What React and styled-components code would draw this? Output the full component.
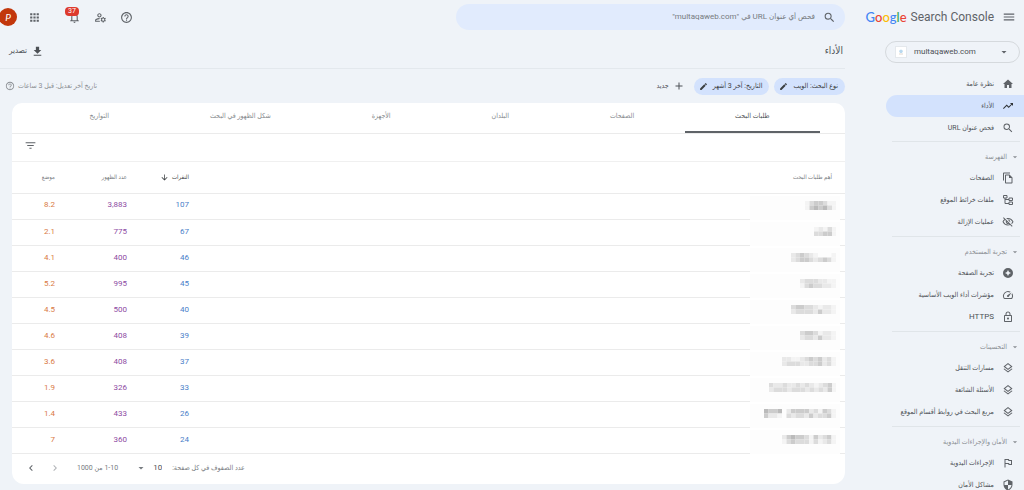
import React from "react";
import styled, { createGlobalStyle, css } from "styled-components";
import {
  MdAdd, MdApps, MdArrowDownward, MdArrowDropDown, MdChevronLeft, MdChevronRight,
  MdEdit, MdFileDownload, MdFilterList, MdHelpOutline, MdHome, MdMenu,
  MdNotificationsNone, MdOutlineFileCopy, MdOutlineFlag,
  MdOutlineLayers, MdOutlineLock, MdOutlineManageAccounts, MdOutlineSpeed,
  MdOutlineVisibilityOff, MdSearch, MdSecurity, MdTrendingUp,
} from "react-icons/md";

const fonts = `Roboto, "DejaVu Sans Condensed", "DejaVu Sans", sans-serif`;

const GlobalStyle = createGlobalStyle`
  * { box-sizing: border-box; }
  body { margin: 0; background: #eff3f8; color: #5f6368; font: 7px/12px ${fonts}; overflow: hidden; }
  button, input, select { font: inherit; color: inherit; border: 0; background: none; padding: 0; margin: 0; }
  button, select { cursor: pointer; }
  h1, h2, ul { margin: 0; padding: 0; list-style: none; font: inherit; }
  a { color: inherit; text-decoration: none; }
  svg { display: block; flex: none; }
`;

const Page = styled.div`
  display: flex;
  height: 100vh;
  overflow: hidden;
`;

const Sidebar = styled.aside`
  flex: none;
  width: 179px;
  overflow: hidden;
`;

const Brand = styled.div`
  display: flex;
  align-items: center;
  gap: 8px;
  height: 34px;
  padding-right: 8px;
`;

const Logo = styled.a`
  display: flex;
  gap: 4px;
  direction: ltr;
  font: 12px/20px Roboto, sans-serif;
  color: #5f6368;
  white-space: nowrap;
`;

const Google = styled.span`
  font: 500 13px/20px Lato, sans-serif;
`;

const Letter = styled.span`
  color: ${(p) => p.$color};
`;

const IconButton = styled.button`
  position: relative;
  display: flex;
  color: ${(p) => (p.$faded ? "#b0b3b6" : "#5f6368")};
`;

const SitePicker = styled.label`
  display: flex;
  direction: ltr;
  align-items: center;
  height: 22px;
  margin: 7px 4px 10px 40px;
  padding: 0 9px;
  border: 1px solid #d5d9dd;
  border-radius: 11px;
`;

const Favicon = styled.span`
  display: grid;
  place-items: center;
  width: 12px;
  height: 12px;
  border: 1px solid #e4e8ec;
  background: #fff;
`;

const PlainSelect = styled.select`
  appearance: none;
  outline: 0;
  font-size: 8px;
  color: #4d5156;
`;

const SiteSelect = styled(PlainSelect)`
  flex: 1;
  min-width: 0;
  padding-left: 7px;
`;

const NavArea = styled.nav`
  margin-left: 41px;
`;

const NavList = styled.ul`
  padding-bottom: 2px;
`;

const NavLink = styled.a`
  display: flex;
  align-items: center;
  gap: 8px;
  height: 22px;
  padding-right: 10px;
  color: #4d5156;
  white-space: nowrap;
  svg { color: #5f6368; }
  ${(p) => p.$active && css`
    background: #d3e2fd;
    border-radius: 11px 0 0 11px;
    svg { color: #303438; }
  `}
`;

const Latin = styled.span`
  font-size: 8px;
`;

const Section = styled.section`
  padding-bottom: 1px;
  &::before {
    content: "";
    display: block;
    height: 1px;
    margin: 0 4px 0 6px;
    background: #e0e5e9;
  }
`;

const SectionTitle = styled.h2`
  display: flex;
  align-items: center;
  gap: 3px;
  height: 25px;
  padding: 5px 4px 0 0;
  color: #8a8e93;
`;

const Main = styled.main`
  flex: 1;
  min-width: 0;
`;

const TopBar = styled.header`
  display: flex;
  justify-content: space-between;
  align-items: center;
  height: 34px;
`;

const SearchBox = styled.label`
  display: flex;
  align-items: center;
  gap: 8px;
  width: 46%;
  height: 26px;
  padding: 0 9px;
  border-radius: 13px;
  background: #e1ebfd;
`;

const SearchInput = styled.input`
  flex: 1;
  min-width: 0;
  outline: 0;
  font-size: 8px;
  &::placeholder { color: #777b80; opacity: 1; }
`;

const Tools = styled.div`
  display: flex;
  align-items: center;
  gap: 13px;
`;

const AppTools = styled.div`
  display: flex;
  align-items: center;
  gap: 11px;
  margin-right: 14px;
`;

const Badge = styled.span`
  position: absolute;
  top: -4px;
  left: -3px;
  padding: 0 3px;
  border-radius: 4px;
  background: #dd3a2e;
  color: #fff;
  line-height: 9px;
`;

const Avatar = styled.button`
  width: 18px;
  height: 18px;
  margin-left: -1px;
  border-radius: 50%;
  background: #c2370c;
  color: #fff;
  font: italic 10px/18px Lato, sans-serif;
`;

const TitleBar = styled.div`
  display: flex;
  justify-content: space-between;
  align-items: center;
  height: 35px;
  padding: 0 2px 0 5px;
  border-bottom: 1px solid #e3e8ed;
`;

const Title = styled.h1`
  font-size: 10px;
  color: #4d5156;
`;

const TextButton = styled.button`
  display: flex;
  align-items: center;
  gap: 4px;
  padding: 0 4px;
  font-size: ${(p) => (p.$large ? 8 : 7)}px;
  color: #4d5156;
`;

const FilterBar = styled.div`
  display: flex;
  align-items: center;
  gap: 5px;
  height: 34px;
`;

const Chip = styled.button`
  display: flex;
  align-items: center;
  gap: 5px;
  height: 17px;
  padding: 0 7px 0 5px;
  border-radius: 9px;
  background: #d3e2fd;
  color: #3c4043;
`;

const Updated = styled.span`
  display: flex;
  align-items: center;
  gap: 3px;
  margin-right: auto;
  padding-left: 5px;
  color: #8a8e93;
`;

const Card = styled.section`
  margin-left: 12px;
  border-radius: 10px 10px 12px 12px;
  background: #fff;
  overflow: hidden;
`;

const Tabs = styled.div`
  display: flex;
  height: 31px;
  padding: 0 25px 0 27px;
  border-bottom: 1px solid #ebebeb;
`;

const Tab = styled.button`
  flex: 1 1 auto;
  padding-bottom: 2px;
  border-bottom: 2px solid ${(p) => (p.$active ? "#5f6368" : "transparent")};
  color: ${(p) => (p.$active ? "#4d5156" : "#85898d")};
`;

const TableTools = styled.div`
  display: flex;
  justify-content: flex-end;
  height: 28px;
  padding: 5px 0 0 12px;
  border-bottom: 1px solid #f0f0f0;
`;

const Table = styled.table`
  width: 100%;
  table-layout: fixed;
  border-collapse: collapse;
`;

const Col = styled.col`
  width: ${(p) => p.$width};
`;

const HeadCell = styled.th`
  height: 31px;
  padding: 0 ${(p) => (p.$first ? 13 : 0)}px 0 0;
  border-bottom: 1px solid #ebebeb;
  text-align: right;
  font-size: 6px;
  font-weight: 400;
  color: ${(p) => (p.$sorted ? "#3c4043" : "#777b80")};
`;

const SortButton = styled.button`
  display: flex;
  align-items: center;
  gap: 3px;
`;

const metricColors = { clicks: "#4a80c9", impressions: "#8d4ba3", position: "#d97a45" };

const MetricCell = styled.td`
  height: 26px;
  padding: 0 0 2px;
  border-bottom: 1px solid #ebebeb;
  font-size: 8px;
  color: ${(p) => metricColors[p.$metric]};
`;

const QueryCell = styled.td`
  height: 26px;
  padding: 0;
`;

const QueryLine = styled.div`
  display: grid;
  grid-template-columns: 5px 90px 1fr;
  height: 26px;
`;

const Rule = styled.span`
  border-bottom: 1px solid #ebebeb;
`;

const Hidden = styled.span`
  display: flex;
  align-items: center;
  padding: 0 4px 3px 0;
  background: linear-gradient(#fff 2px, #fdfdfd 2px);
`;

const Pager = styled.footer`
  display: flex;
  justify-content: flex-end;
  align-items: center;
  height: 30px;
  padding: 0 0 3px 13px;
  color: #777b80;
`;

const PageSize = styled.label`
  display: flex;
  align-items: center;
  margin-left: 17px;
`;

const SizeSelect = styled(PlainSelect)`
  margin: 0 10px 0 6px;
`;

const Arrows = styled.div`
  display: flex;
  gap: 12px;
  margin-right: 16px;
`;

function PageExperienceIcon({ size }) {
  return (
    <svg width={size} height={size} viewBox="0 0 24 24" fill="currentColor">
      <path fillRule="evenodd" d="M12 2a10 10 0 1 0 0 20 10 10 0 0 0 0-20Zm0 4 2 4 4 2-4 2-2 4-2-4-4-2 4-2Z" />
    </svg>
  );
}

function SitemapIcon({ size }) {
  return (
    <svg width={size} height={size} viewBox="0 0 24 24" fill="none" stroke="currentColor" strokeWidth="2">
      <path d="M3 3h7v5H3ZM14 8h7v5h-7ZM14 16h7v5h-7ZM6 8v11h8M6 11h8" />
    </svg>
  );
}

const shades = ["none", "#f4f4f4", "#e9e9e9", "#dcdcdc", "#cccccc", "#bababa"];

function Mosaic({ cells }) {
  const columns = cells[0].length;
  return (
    <svg width={columns * 4.5} height="9" viewBox={`0 0 ${columns * 4.5} 9`} aria-hidden="true">
      {cells.flatMap((line, y) =>
        [...line].map((n, x) => (
          <rect key={`${x}-${y}`} x={x * 4.5} y={y * 4.5} width="4.5" height="4.5" fill={shades[n]} />
        ))
      )}
    </svg>
  );
}

const google = [["G", "#4285f4"], ["o", "#ea4335"], ["o", "#fbbc05"], ["g", "#4285f4"], ["l", "#34a853"], ["e", "#ea4335"]];

const topLinks = [
  ["نظرة عامة", MdHome],
  ["الأداء", MdTrendingUp],
  ["فحص عنوان URL", MdSearch],
];

const sections = [
  ["الفهرسة", [["الصفحات", MdOutlineFileCopy], ["ملفات خرائط الموقع", SitemapIcon], ["عمليات الإزالة", MdOutlineVisibilityOff]]],
  ["تجربة المستخدم", [["تجربة الصفحة", PageExperienceIcon], ["مؤشرات أداء الويب الأساسية", MdOutlineSpeed], ["HTTPS", MdOutlineLock]]],
  ["التحسينات", [["مسارات التنقل", MdOutlineLayers], ["الأسئلة الشائعة", MdOutlineLayers], ["مربع البحث في روابط أقسام الموقع", MdOutlineLayers]]],
  ["الأمان والإجراءات اليدوية", [["الإجراءات اليدوية", MdOutlineFlag], ["مشاكل الأمان", MdSecurity]]],
];

const tabs = ["طلبات البحث", "الصفحات", "البلدان", "الأجهزة", "شكل الظهور في البحث", "التواريخ"];

const rows = [
  ["107", "3,883", "8.2", ["1344311", "1454531"]],
  ["67", "775", "2.1", ["12131", "33441"]],
  ["46", "400", "4.1", ["2343210001", "2344323431"]],
  ["45", "995", "5.2", ["23332211", "13433221"]],
  ["40", "500", "4.5", ["3443321221", "2333324221"]],
  ["39", "408", "4.6", ["34431221", "23324221"]],
  ["37", "408", "3.6", ["221123434231", "233322334231"]],
  ["33", "326", "1.9", ["322322323212341", "233323332323241"]],
  ["26", "433", "1.4", ["5445024444231431", "4221032332423341"]],
  ["24", "360", "7", ["245443142341", "134333131231"]],
];

function NavItems({ links, current }) {
  return (
    <NavList>
      {links.map(([label, Icon]) => (
        <li key={label}>
          <NavLink href="#" $active={label === current} aria-current={label === current ? "page" : undefined}>
            <Icon size={12} />
            {label === "HTTPS" ? <Latin>{label}</Latin> : label}
          </NavLink>
        </li>
      ))}
    </NavList>
  );
}

export default function App() {
  return (
    <Page dir="rtl">
      <GlobalStyle />
      <Sidebar>
        <Brand>
          <IconButton aria-label="القائمة"><MdMenu size={14} /></IconButton>
          <Logo href="#">
            <Google>{google.map(([c, color], i) => <Letter key={i} $color={color}>{c}</Letter>)}</Google>
            <span>Search Console</span>
          </Logo>
        </Brand>
        <SitePicker>
          <Favicon>
            <svg width="6" height="6" viewBox="0 0 6 6">
              <path d="M1 2Q3-1 5 2L4 4H2Z" fill="#b9d9ef" />
              <path d="M1 5h4" stroke="#e3d8cf" />
            </svg>
          </Favicon>
          <SiteSelect aria-label="الموقع"><option>multaqaweb.com</option></SiteSelect>
          <MdArrowDropDown size={12} />
        </SitePicker>
        <NavArea>
          <NavItems links={topLinks} current="الأداء" />
          {sections.map(([title, links]) => (
            <Section key={title}>
              <SectionTitle><MdArrowDropDown size={10} />{title}</SectionTitle>
              <NavItems links={links} />
            </Section>
          ))}
        </NavArea>
      </Sidebar>
      <Main>
        <TopBar>
          <SearchBox>
            <MdSearch size={13} />
            <SearchInput aria-label="فحص عنوان URL" placeholder={'فحص أي عنوان URL في "multaqaweb.com"'} />
          </SearchBox>
          <Tools>
            <IconButton aria-label="مساعدة"><MdHelpOutline size={13} /></IconButton>
            <IconButton aria-label="إعدادات المستخدم"><MdOutlineManageAccounts size={13} /></IconButton>
            <IconButton aria-label="الإشعارات"><MdNotificationsNone size={13} /><Badge>37</Badge></IconButton>
            <AppTools>
              <IconButton aria-label="التطبيقات"><MdApps size={13} /></IconButton>
              <Avatar>P</Avatar>
            </AppTools>
          </Tools>
        </TopBar>
        <TitleBar>
          <Title>الأداء</Title>
          <TextButton $large><MdFileDownload size={13} />تصدير</TextButton>
        </TitleBar>
        <FilterBar>
          <Chip>نوع البحث: الويب<MdEdit size={9} /></Chip>
          <Chip>التاريخ: آخر 3 أشهر<MdEdit size={9} /></Chip>
          <TextButton><MdAdd size={12} />جديد</TextButton>
          <Updated>تاريخ آخر تعديل: قبل 3 ساعات<MdHelpOutline size={10} /></Updated>
        </FilterBar>
        <Card>
          <Tabs role="tablist">
            {tabs.map((tab, i) => (
              <Tab key={tab} role="tab" aria-selected={i === 0} $active={i === 0}>{tab}</Tab>
            ))}
          </Tabs>
          <TableTools>
            <IconButton aria-label="فلترة"><MdFilterList size={13} /></IconButton>
          </TableTools>
          <Table>
            <colgroup>
              <Col $width="auto" /><Col $width="62px" /><Col $width="72px" /><Col $width="43px" />
            </colgroup>
            <thead>
              <tr>
                <HeadCell $first>أهم طلبات البحث</HeadCell>
                <HeadCell $sorted><SortButton>النقرات<MdArrowDownward size={9} /></SortButton></HeadCell>
                <HeadCell>عدد الظهور</HeadCell>
                <HeadCell>موضع</HeadCell>
              </tr>
            </thead>
            <tbody>
              {rows.map(([clicks, impressions, position, cells]) => (
                <tr key={clicks}>
                  <QueryCell><QueryLine><Rule /><Hidden><Mosaic cells={cells} /></Hidden><Rule /></QueryLine></QueryCell>
                  <MetricCell $metric="clicks">{clicks}</MetricCell>
                  <MetricCell $metric="impressions">{impressions}</MetricCell>
                  <MetricCell $metric="position">{position}</MetricCell>
                </tr>
              ))}
            </tbody>
          </Table>
          <Pager>
            <PageSize>
              عدد الصفوف في كل صفحة:
              <SizeSelect><option>10</option></SizeSelect>
              <MdArrowDropDown size={12} />
            </PageSize>
            <span>1-10 من 1000</span>
            <Arrows>
              <IconButton $faded aria-label="السابق"><MdChevronRight size={12} /></IconButton>
              <IconButton aria-label="التالي"><MdChevronLeft size={12} /></IconButton>
            </Arrows>
          </Pager>
        </Card>
      </Main>
    </Page>
  );
}
